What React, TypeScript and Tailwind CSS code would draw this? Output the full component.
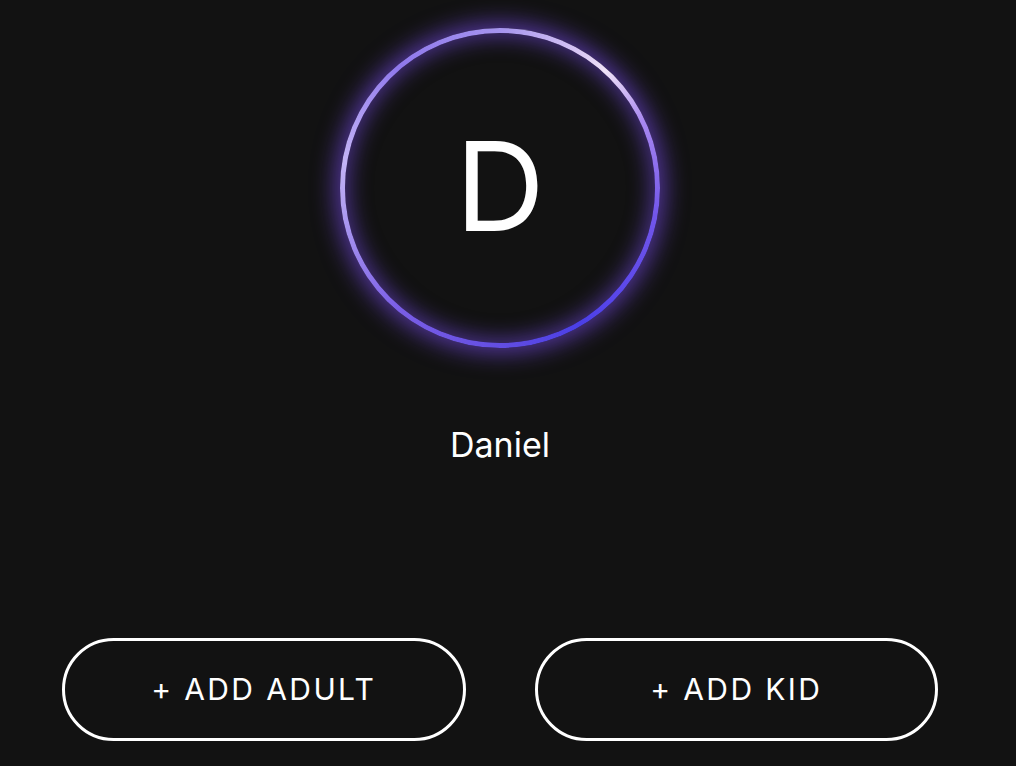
import React from "react";

export default function App() {
  return (
    <div className="min-h-[766px] w-full bg-[#121212] overflow-hidden" style={{ fontFamily: "Inter, 'Open Sans', sans-serif" }}>
      <div className="w-[1000px] flex flex-col items-center pt-[28px]">
        <div
          className="w-[320px] h-[320px] rounded-full p-[5px] shadow-[0_0_22px_6px_rgba(120,75,235,0.6)]"
          style={{
            background:
              "conic-gradient(from 0deg, #a594ee 0deg, #d8c6f5 30deg, #efe2f8 42deg, #a888f0 65deg, #7256ea 100deg, #5846ea 135deg, #4b3fe6 150deg, #6650e2 185deg, #7a5ee6 220deg, #b3a2f2 265deg, #c4b4f6 280deg, #8f78ec 320deg, #a594ee 360deg)",
          }}
        >
          <div className="w-full h-full rounded-full bg-[#121212] shadow-[inset_0_0_20px_5px_rgba(120,75,235,0.5)] flex items-center justify-center">
            <span className="text-white text-[124px] font-normal leading-none mb-[4px]">D</span>
          </div>
        </div>
        <div className="mt-[80px] text-white text-[34px] leading-none">Daniel</div>
        <div className="w-full mt-[176px] px-[62px] flex gap-[69px]">
          <button className="flex-1 h-[103px] rounded-full border-[3px] border-white text-white text-[30px] tracking-[0.08em] flex items-center justify-center">
            + ADD ADULT
          </button>
          <button className="flex-1 h-[103px] rounded-full border-[3px] border-white text-white text-[30px] tracking-[0.08em] flex items-center justify-center">
            + ADD KID
          </button>
        </div>
      </div>
    </div>
  );
}
